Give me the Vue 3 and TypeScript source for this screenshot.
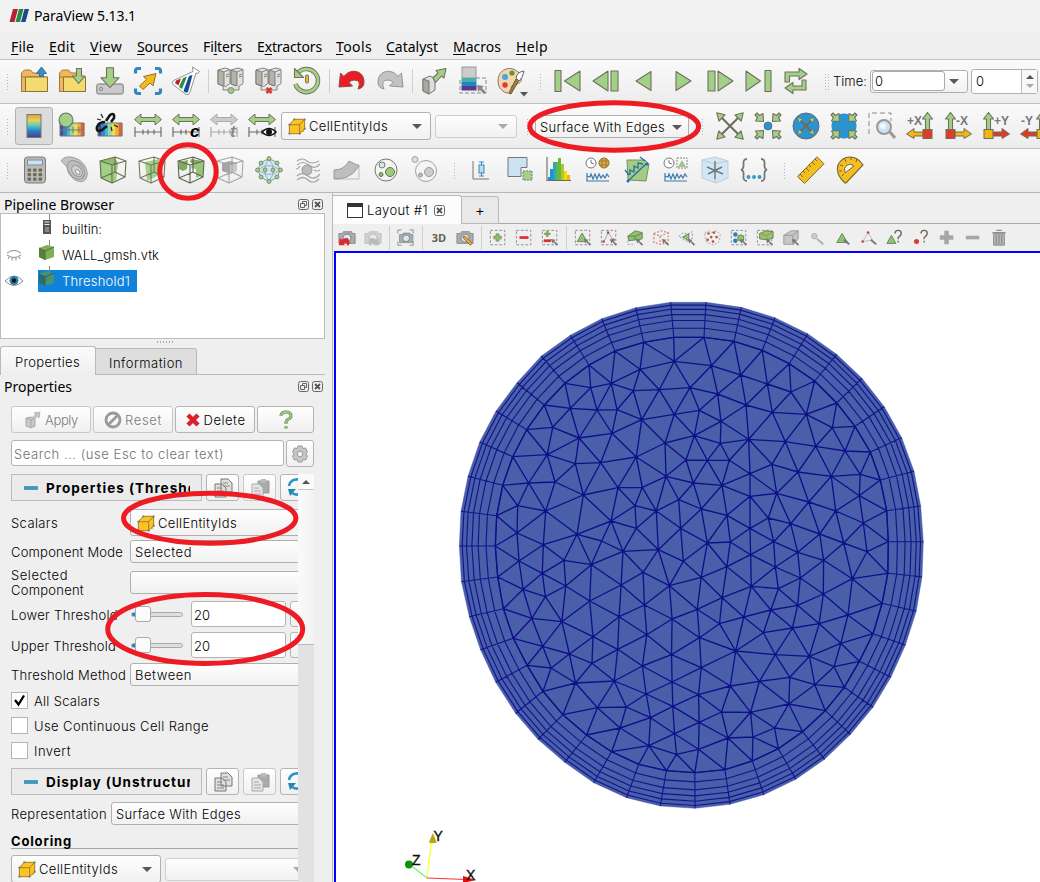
<script setup lang="ts">
type Pt = [number, number]

/* Stretches a label to a given pixel width through letter spacing. */
const vFit = {
  mounted(el: HTMLElement, binding: { value: number }) {
    const n = (el.textContent || '').trim().length
    const w = el.getBoundingClientRect().width
    if (n > 0 && w > 0) el.style.letterSpacing = ((binding.value - w) / n).toFixed(3) + 'px'
  },
}

const G = 'fill="#a3d087" stroke="#6f7060" stroke-width="1.1" stroke-linejoin="round"'
const GY = 'fill="#c2c2c2" stroke="#959595" stroke-width="1" stroke-linejoin="round"'
const DK = 'fill="none" stroke="#6c6c5a" stroke-width="1.1"'
const server = `<g fill="#e3e2e0" stroke="#777" stroke-width=".9" stroke-linejoin="round"><path d="M1 3l7-2 5 1.500v14L8 20l-7-3z"/><path d="M1 3l6 2v14l-6-2z" fill="#b4b3a7"/><path d="M7 5l6-2.500M9 8l3-1M9 10l3-1M14 3l7-2 5 1.500v14L21 20l-7-3z"/><path d="M14 3l6 2v14l-6-2z" fill="#b4b3a7"/><path d="M20 5l6-2.500M22 8l3-1M22 10l3-1M6 20v3h16v-4" /></g>`
const rainbow = (x: number, y: number, w: number, h: number) =>
  ['#394a9b', '#2f85c7', '#41bcd6', '#9fd49b', '#e6df5d', '#f3b03c', '#d56a35'].map((c, i) => `<rect x="${x + (i * w) / 7}" y="${y}" width="${w / 7 + 0.3}" height="${h}" fill="${c}"/>`).join('')
const span = (c: string, s: string) => `<path d="M.5 7.500L7 2v3.500h14V2l6.500 5.500L21 13V9.500H7V13z" fill="${c}" stroke="${s}"/><path d="M1 15v10M27 15v10M1 20h26M9 17.500v5M14 17.500v5M20 17.500v5" fill="none" stroke="${s}" stroke-width="1.200"/>`
const cubeWire = (c: string) => `<path d="M1 5l15-4 11 4-1 16-13 6L2 22zM1 5l12 4 14-4M13 9v18M16 1v15L2 22M16 16l10 5" fill="none" stroke="${c}" stroke-width="1.100" stroke-linejoin="round"/>`
const cam = (o: number) => `<g opacity="${o}"><path d="M1 5h4l1-2h9l1 2h3v11H1z" fill="#ababab" stroke="#888"/><circle cx="10" cy="10" r="4.500" fill="#d8e8f2" stroke="#8795a0" stroke-width="1.500"/></g>`
const marquee = '<rect x="1.500" y="1.500" width="16" height="16" fill="none" stroke="#888" stroke-width="1" stroke-dasharray="3 2"/>'
const cursor = '<path d="M11 11l5 1-1.300 1.300L19 17l-1.500 1.500-3.700-4L12.500 16z" fill="#77776f"/>'
const outward = (w: number) => `<path d="M5 5l18 18M23 5L5 23" stroke="#6c6c5a" stroke-width="${w}"/><path d="M.8.8l8.200 2L3 9zM27.200.8l-2 8.200L19 3zM27.200 27.200l-8.200-2L25 19zM.8 27.200l2-8.200L9 25z" ${G}/>`
const inHeads = (s: number) => {
  const one = '<path d="M1 3l2-2 2.500 2.500L9 1.500 9.500 9.500 1.500 9 3.500 5.500z" />'
  return `<g ${G}>` + [0, 90, 180, 270].map(a => `<g transform="rotate(${a} 14 14) scale(${s})">${one}</g>`).join('') + '</g>'
}
const axis = (label: string, left: boolean, horiz: string, box: string) => {
  const bx = left ? 17 : 2
  const ax = left ? 'M17 20H8v-3.500L.5 22 8 26.500V24h9z' : 'M11 20h9v-3.500L27.500 22 20 26.500V24h-9z'
  return `<path d="M${bx + 2.5} 18V7h-3L${bx + 4.5} .5 ${bx + 9.5} 7h-3v11z" ${G}/><path d="${ax}" fill="${horiz}" stroke="#6f6f55"/><rect x="${bx}" y="17.500" width="9" height="9" fill="${box}" stroke="#6f6f55"/><text x="${left ? 1 : 12}" y="13" font-family="Liberation Sans" font-weight="bold" font-size="12" fill="#777">${label}</text>`
}

const icons: Record<string, string> = {
  open: '<path d="M1.500 25V6l3-3h6l2.500 3h9v12" fill="#f2b75d" stroke="#a57a38"/><path d="M5.500 10H27.500V24.500H1.500V10z" fill="#f2b75d" stroke="#a57a38"/><path d="M5.500 10H27.500V24.500H5.500z" fill="#f5da70" stroke="#857440"/><path d="M19.500 9.500V6.500h-3l5-6.500 5 6.500h-3v3z" fill="#2a92cf" stroke="#456c88"/>',
  load: '<path d="M1.500 25V6l3-3h6l2.500 3h9v12" fill="#f2b75d" stroke="#a57a38"/><path d="M5.500 10H27.500V24.500H1.500V10z" fill="#f2b75d" stroke="#a57a38"/><path d="M5.500 10H27.500V24.500H5.500z" fill="#f5da70" stroke="#857440"/><path d="M18.500 1.500h5V9H27l-6.500 7.500L14.500 9h4z" ' + G + '/>',
  save: '<rect x=".8" y="17" width="26.400" height="10" rx="1.500" fill="#c9c9c9" stroke="#777"/><circle cx="5" cy="22" r="1.500" fill="#eee" stroke="#777"/><path d="M10.500.8h7v10H23L14 20.500 5 10.800h5.500z" ' + G + '/>',
  extract: '<path d="M1.500 6.500V4q0-2.500 2.500-2.500h3M21 1.500h3q2.500 0 2.500 2.500v2.500M26.500 21.500v2.500q0 2.500-2.500 2.500h-3M7 26.500H4q-2.500 0-2.500-2.500v-2.500" fill="none" stroke="#3187bb" stroke-width="3.200"/><path d="M9.500 9.500L22 6.500l-3 12.500-3-3-7 6.500-3.500-3.500 7-6.500z" fill="#f5b916" stroke="#8b7330"/>',
  flask: '<path d="M20.500 0l7 4.500-1.500 2-2-.500L18 25q-1 3.500-4 2.500L1 17.500q-2-1.500.5-4L21 4.500z" fill="#fff" stroke="#888" stroke-width=".9"/><path d="M4 13.500l5-2-2.500 7-3.500-2.500z" fill="#bd2432"/><path d="M11 11l4-1.500-5 12.500-3-2z" fill="#279044"/><path d="M17 9l3.500-1L16 25q-2 1.500-4.500-1z" fill="#174a91"/>',
  connect: server + '<circle cx="14" cy="23.500" r="3" fill="#9ccc80" stroke="#777" stroke-width=".8"/>',
  disconnect: server + '<path d="M11.500 21l5 5M16.500 21l-5 5" stroke="#d93a2e" stroke-width="2.600"/>',
  timer: '<path d="M4 7A11.500 11.500 0 1 1 2.500 17" fill="none" stroke="#70725f" stroke-width="4.600"/><path d="M4 7A11.500 11.500 0 1 1 2.500 17" fill="none" stroke="#a3d087" stroke-width="2.800"/><path d="M1.500 1.500v9h9z" ' + G + '/><rect x="12.500" y="8" width="3" height="8" rx="1" fill="#f5b916" stroke="#777"/>',
  undo: '<path d="M1 20L2.500 6l3.500 3.500C12 1 26 3 26 15q0 6-6 7 4-9-4-9-3 0-5 2.500L14.500 19z" fill="#ee1c24" stroke="#874a3f"/>',
  redo: '<path d="M27 20L25.500 6 22 9.500C16 1 2 3 2 15q0 6 6 7-4-9 4-9 3 0 5 2.500L13.500 19z" ' + GY + '/>',
  serverArrow: '<path d="M2 12l7-3 5 2v12l-6 4-6-3z" fill="#ddd" stroke="#777"/><path d="M2 12l6 2v13l-6-3z" fill="#a8a8a0" stroke="#777"/><path d="M12 11l5-5-2-2.500 10-2-2 9.500-2.500-2-6 6.500z" ' + G + '/>',
  selectMap: '<rect x="3" y="0" width="14" height="11" fill="#ccc" stroke="#999"/><path d="M2.500 11h15v4h-15z" fill="#44b0ae"/><path d="M2.500 15h15v4h-15z" fill="#2284c6"/><path d="M2.500 19h15v4.500h-15z" fill="#533a8b"/><path d="M17 11h10v15H1V11" fill="none" stroke="#888" stroke-dasharray="4 2"/><path d="M18 18l7 1-2 2 4 4-2 2-4-4-2 2z" fill="#888"/>',
  palette: '<path d="M24 9C18-3 1 0 1 14c0 9 8 13 12 12 4-2-1-6 3-8 6-1 10-3 8-9z" fill="#f3d6ad" stroke="#8c7359"/><circle cx="8" cy="10" r="3" fill="#42a7dc"/><circle cx="15" cy="6" r="2.600" fill="#5f9440"/><circle cx="8" cy="18" r="2.700" fill="#df382e"/><path d="M12 26l7-14 3 1-8 14z" fill="#a87d3a" stroke="#675a3b"/><path d="M19 11q1-6 8-7-1 7-5 10z" fill="#fff" stroke="#666"/><path d="M23 25h8l-4 4.500z" fill="#555"/>',
  first: `<path d="M1 3.500h6v21H1zM26 4L10.500 14 26 24z" ${G}/>`,
  back: `<path d="M16 4L1 14l15 10zM19 4h7v20h-7z" ${G}/>`,
  rev: `<path d="M21 4.500L6 14l15 9.500z" ${G}/>`,
  play: `<path d="M8 4.500L23 14 8 23.500z" ${G}/>`,
  fwd: `<path d="M12 4l15 10-15 10zM2 4h7v20H2z" ${G}/>`,
  last: `<path d="M21 3.500h6v21h-6zM2 4l14.500 10L2 24z" ${G}/>`,
  loop: `<path d="M3 15V5h14V1.500L25 7l-8 5.500V9H7.500v6zM24 13v10H11v3.500L3 21l8-5.500V19h9v-6z" ${G}/>`,
  colorbar: '<defs><linearGradient id="cb" x1="0" y1="0" x2="0" y2="1"><stop offset="0" stop-color="#e49a32"/><stop offset=".25" stop-color="#e2d65c"/><stop offset=".48" stop-color="#61c8bd"/><stop offset=".7" stop-color="#2387c9"/><stop offset="1" stop-color="#513a86"/></linearGradient></defs><rect x="7" y="2.500" width="14" height="23" fill="url(#cb)" stroke="#777"/>',
  editMap: rainbow(2, 11, 24, 13) + '<path d="M2 11h24v13H2zM2 18h24M9 15v6M15 15v6M21 15v6" fill="none" stroke="#777"/><circle cx="8" cy="8" r="7" ' + G + '/>',
  linkMap: rainbow(2, 11, 24, 13) + '<path d="M2 11h24v13H2z" fill="none" stroke="#777"/><path d="M10 9l4-6q5-3 4 3l-3 4M9 10q-6 0-8 5-1 6 5 3l5-4" fill="none" stroke="#151515" stroke-width="2.600"/><path d="M5 2l2 4M1 7l4 1M18 13l4 2M15 15l1 4" stroke="#222" stroke-width="1.200"/>',
  range: span('#a3d087', '#6f7060'),
  rangeC: span('#a3d087', '#6f7060') + '<text x="18" y="25" font-size="17" font-style="italic" font-weight="bold" font-family="Liberation Sans">c</text>',
  rangeT: span('#ccc', '#aaa') + '<text x="20" y="25" font-size="17" font-style="italic" font-weight="bold" font-family="Liberation Sans" fill="#888">t</text>',
  rangeEye: span('#a3d087', '#6f7060') + '<path d="M14 20q7-7 14 0-7 7-14 0z" fill="#fff" stroke="#111" stroke-width="1.500"/><circle cx="21" cy="20" r="3" fill="#111"/>',
  resetView: outward(2),
  zoomData: inHeads(1) + '<circle cx="14" cy="14" r="4" fill="#2994d0" stroke="#5d7a80"/>',
  resetClosest: '<circle cx="14" cy="14" r="13" fill="#2994d0" stroke="#667"/><g transform="translate(5 5) scale(.64)">' + outward(3) + '</g>',
  zoomClosest: '<circle cx="14" cy="14" r="12.500" fill="#2994d0"/><rect x="3" y="3" width="22" height="22" rx="3" fill="#2994d0"/>' + inHeads(1),
  zoomBox: '<path d="M1 22V1h22v8" fill="none" stroke="#888" stroke-dasharray="5 3"/><path d="M22 20l5 6" stroke="#999" stroke-width="3"/><circle cx="16" cy="15" r="7" fill="#cde3f3" stroke="#999" stroke-width="2"/><circle cx="15" cy="14" r="3" fill="#eef8ff"/>',
  xp: axis('+X', true, '#f2b613', '#e03a2b'),
  xm: axis('-X', false, '#f2b613', '#e03a2b'),
  yp: axis('+Y', false, '#e03a2b', '#f2b613'),
  ym: axis('-Y', true, '#e03a2b', '#f2b613'),
  calc: '<rect x="3.500" y="1" width="21" height="26" rx="3" fill="#bbb" stroke="#7b7b7b"/><rect x="6.500" y="4" width="15" height="5" fill="#c7e3f5" stroke="#889"/>' + [12.5, 17, 21.5].map(y => [6.5, 12, 17.5].map(x => `<rect x="${x}" y="${y}" width="3.600" height="3.200" rx="1" fill="#6e6e50"/>`).join('')).join(''),
  contour: '<path d="M1 5Q4 0 11 1 20 2 25 10 29 17 26 23 22 28 15 24 8 19 7 11z" fill="#c2c2c2" stroke="#a3a3a3"/><ellipse cx="16" cy="14" rx="10.500" ry="7.500" transform="rotate(50 16 14)" fill="#bdbdbd" stroke="#999"/><ellipse cx="17" cy="15" rx="6.500" ry="4.500" transform="rotate(50 17 15)" fill="#d0d0d0" stroke="#999"/><ellipse cx="17.500" cy="15.500" rx="2.800" ry="1.900" transform="rotate(50 17 16)" fill="#eee" stroke="#999"/>',
  clip: '<path d="M1 5l15-4v1L19 7l-2 17-4 3L2 22z" fill="#8fbd70"/><path d="M2 5l11 4h6l-3 15-3 3L3 23z" fill="#a3d087"/>' + cubeWire('#6b7052'),
  slice: '<path d="M7 6l14-3v16L9 25z" fill="#a3d087"/>' + cubeWire('#75795f'),
  threshold: '<path d="M2 6l9-2-1 9-4 2-4-2zM14 3l12 2-10 3-3-2z" fill="#7faa60"/><path d="M15 8l11-3v14l-7 3v-9l-5-1z" fill="#97c67b"/>' + cubeWire('#60634e'),
  subset: '<path d="M6 7l8-2 7 2v8l-6 3-9-3z" fill="#a5a5a5"/><path d="M14 9l7-2v8l-7 3z" fill="#c9c9c9"/>' + cubeWire('#a5a5a5'),
  glyph: '<circle cx="14" cy="14" r="10.500" fill="#d3e8f7" stroke="#8b9a98"/><path d="M14 3q-9 11 0 22 9-11 0-22M3 14q11-9 22 0-11 9-22 0" fill="none" stroke="#8ba5b2" stroke-width=".8"/>' + [[14, 2.5], [6, 7], [22, 7], [2.5, 14], [10, 14], [18, 14], [25.5, 14], [6, 21], [22, 21], [14, 25.5]].map(p => `<circle cx="${p[0]}" cy="${p[1]}" r="2" fill="#a3d087" stroke="#66734f" stroke-width=".7"/>`).join(''),
  stream: '<circle cx="13" cy="14" r="5" fill="#bbb" stroke="#999"/><path d="M3 5q5-4 10 0t12 0M3 9q6-5 12 0t11-1M3 20q5-5 11 0t12-2M3 24q6-5 11 0t11-1M2 13q2 0 4-3M20 14q3 2 6 0" fill="none" stroke="#a5a5a5" stroke-width="1.200"/>',
  warp: '<path d="M20 9h6v14H1" fill="none" stroke="#bbb"/><path d="M1 14q10 0 15-9l10 5q-5 8-12 11-6 2-13 2z" fill="#bebebe" stroke="#999"/>',
  group: '<circle cx="14" cy="14" r="11" fill="#f4f4f2" stroke="#77776b"/><circle cx="10" cy="9" r="3" fill="#cfe8e2" stroke="#777"/><circle cx="18" cy="16" r="4.500" fill="#9fcb7e" stroke="#66734f"/><circle cx="9" cy="18.500" r="2" fill="#95b982" stroke="#66734f"/>',
  ungroup: '<circle cx="15" cy="15" r="10.500" fill="#f5f5f5" stroke="#a2a2a2"/><circle cx="4" cy="3.500" r="3" fill="#ddd" stroke="#a2a2a2"/><circle cx="18" cy="16" r="4.500" fill="#ccc" stroke="#999"/><circle cx="9.500" cy="19" r="2" fill="#bbb" stroke="#999"/>',
  box: '<path d="M6 5v18h16" fill="none" stroke="#76765f"/><path d="M12 6h5M14.500 6v14M12 20h5" stroke="#3989bd"/><rect x="12" y="9" width="5" height="8" fill="#b9dcf2" stroke="#3989bd"/>',
  corner: '<path d="M2 1.500h19v10h-6v9H2z" fill="#cce3f4" stroke="#777"/><rect x="17" y="15" width="9" height="9" fill="#a5d086" stroke="#777" stroke-dasharray="2 1"/>',
  hist: '<path d="M3 24v-3h2v-8h3v11z" fill="#1993e8"/><path d="M8 24V6h3v18z" fill="#37a7a0"/><path d="M11 24V6h2v18z" fill="#5cb75d"/><path d="M13 24V2h3v22z" fill="#68b83f"/><path d="M16 24V8h3v16z" fill="#acc735"/><path d="M19 24v-9h3v9z" fill="#fcda00"/><path d="M22 24v-5h3v5z" fill="#f2b613"/><path d="M2 1v23.500h24" ' + DK + '/>',
  timeCell: '<circle cx="7" cy="7" r="5" fill="#fff" stroke="#777"/><path d="M7 4v3l3 1" fill="none" stroke="#777"/><circle cx="20" cy="7" r="5" fill="#d8a83f" stroke="#8b7030"/><path d="M16 5h8M16 9h8M18 3v8M22 3v8" stroke="#8b7030" stroke-width=".7"/><path d="M3 17v8h22M3 20l3 1 1-3 2 5 2-5 2 5 2-5 2 4 2-3 2 3 2-4 2 3" fill="none" stroke="#3a7ca9" stroke-width="1.200"/>',
  plotLine: '<path d="M4 4l18 0 4 4-3 17-18-1z" fill="#a2cc83" stroke="#739260"/><path d="M5 25L24 7M2 14l4 5M17 1l5 4M7 19l0-5 4 2 0-6 4 2 0-5 5 1" fill="none" stroke="#276d9c" stroke-width="1.300"/><circle cx="5" cy="25" r="1.500" fill="#1673bc"/><circle cx="24" cy="8" r="1.500" fill="#1673bc"/>',
  timeSel: '<circle cx="7" cy="7" r="5" fill="#fff" stroke="#777"/><path d="M7 4v3l3 1" fill="none" stroke="#777"/><rect x="15" y="2" width="10" height="10" fill="none" stroke="#888" stroke-dasharray="2 1"/><path d="M16 11l4-7 4 7z" fill="#9ec77f"/><path d="M3 17v8h22M3 20l3 1 1-3 2 5 2-5 2 5 2-5 2 4 2-3 2 3 2-4 2 3" fill="none" stroke="#3a7ca9" stroke-width="1.200"/>',
  probe: '<path d="M1 4l13-3 13 4v17l-12 5L1 22z" fill="#d1e7f8" stroke="#c4cbd0"/><path d="M1 4l13 4 13-3M14 8v19" fill="none" stroke="#c0ccd4"/><path d="M14 5v18M6 11l16 7M7 18l14-7" stroke="#6f7779" stroke-width="1.400"/>',
  python: '<path d="M7 3Q3 3 3.500 8T1 14q3 0 2.500 5.500T7 25M21 3q4 0 3.500 5T27 14q-3 0-2.500 5.500T21 25" fill="none" stroke="#777" stroke-width="1.800"/><g fill="#369acb"><circle cx="8.500" cy="21" r="2"/><circle cx="14" cy="21" r="2"/><circle cx="19.500" cy="21" r="2"/></g>',
  ruler: '<path d="M.5 20.500L20 .8l7 7L7.500 27.500z" fill="#f4be20" stroke="#806d2d"/><path d="M3 18l3 3M6 15l2 2M9 12l3 3M12 9l2 2M15 6l3 3M18 3l2 2" stroke="#716634"/>',
  protractor: '<path d="M9 27Q-1 18 2 9 6 1 14 1 22 1 27 9L10 27z" fill="#f4be20" stroke="#76672f" stroke-width="1.200"/><path d="M9 17q-2-5 2-8 4-2 7 1z" fill="#f5f5f5" stroke="#76672f"/><path d="M6 20l2-2M3 15h3M4 9l3 1M9 3l1 3M15 1v3M21 3l-1 3" stroke="#76672f"/>',
  cube: '<path d="M6 1.500L18 5v11H6z" fill="#f5c02b"/><path d="M1.500 8L7 2h11.500v10.500L13 18H1.500zM1.500 8H13v10M13 8l5.500-6" fill="#fcc423" stroke="#98742c"/><g fill="#777"><path d="M.5 7h2v2h-2zM6 1h2v2H6zM17.500 1h2v2h-2zM12 17h2v2h-2zM.5 17h2v2h-2zM17.500 11.500h2v2h-2z"/></g>',
  camUndo: cam(1) + '<path d="M1 18l1-8 2 2q8-5 9 3 0 3-3 4 1-5-4-3l2 2z" fill="#dd2b2b"/>',
  camRedo: cam(0.45) + '<path d="M17 18l-1-8-2 2q-8-5-9 3 0 3 3 4-1-5 4-3l-2 2z" fill="#bbb"/>',
  capture: '<g transform="translate(2 2) scale(.82)">' + cam(1) + '</g><path d="M1 5V1h4M14 1h4v4M18 14v4h-4M5 18H1v-4" fill="none" stroke="#888"/>',
  camEdit: cam(1) + '<path d="M8 8l2 0 8 8-2 2-8-8z" fill="#e8ac30" stroke="#7d672f"/>',
  plus: marquee + '<path d="M9.500 5v9M5 9.500h9" stroke="#6d8e55" stroke-width="4"/><path d="M9.500 6v7M6 9.500h7" stroke="#8bc36b" stroke-width="2.500"/>',
  minus: marquee + '<path d="M5 9.500h10" stroke="#dd2c2d" stroke-width="3"/>',
  pm: marquee + '<path d="M7 2v7M3.500 5.500h7" stroke="#79a85d" stroke-width="2.500"/><path d="M3 13h8" stroke="#dd2c2d" stroke-width="3"/>' + cursor,
  selTri: marquee + '<path d="M3.500 14L9 4.500 14.500 14z" fill="#91c373" stroke="#668054"/>' + cursor,
  selPts: marquee + '<path d="M4 15L9 4l6 9" fill="none" stroke="#999"/><g fill="#ad5940"><circle cx="9" cy="4" r="1.500"/><circle cx="4" cy="14" r="1.500"/><circle cx="15" cy="12" r="1.500"/></g>' + cursor,
  selFr: '<path d="M2 8l8-6 8 2v7l-6 1-9 1z" fill="#8fc06e" stroke="#628152"/><path d="M2 8l8 0 8-3M10 8v4" fill="none" stroke="#628152"/><path d="M2 13v4h7" fill="none" stroke="#999" stroke-dasharray="2 2"/>' + cursor,
  selFrP: '<path d="M2 5l8-3 8 2v11l-8 2-8-2zM2 5l7 3v9M9 8l9-4" fill="none" stroke="#df7d72" stroke-dasharray="2 2" stroke-width="1.400"/>' + cursor,
  lasso: '<path d="M1 8l5-4 5 2 5-3v7l-3 4-5-1-4-3z" fill="none" stroke="#888" stroke-dasharray="2 2"/><path d="M5 9l7-4v8z" fill="#91c373" stroke="#668054"/>' + cursor,
  lassoP: '<path d="M1 4l4-2 4 2 5-2 4 4-1 8-6 4-8-3-2-6z" fill="none" stroke="#999" stroke-dasharray="2 2"/><g fill="#b45942"><circle cx="5" cy="5" r="1.500"/><circle cx="11" cy="4" r="1.500"/><circle cx="8" cy="9" r="1.500"/><circle cx="4" cy="12" r="1.500"/><circle cx="14" cy="9" r="1.500"/><circle cx="10" cy="14" r="1.500"/></g>',
  blocks: marquee + '<circle cx="6" cy="6" r="2.500" fill="#2d83b3"/><circle cx="6" cy="13" r="2.500" fill="#2d83b3"/><circle cx="12" cy="10" r="3.500" fill="#91c373" stroke="#668054"/>' + cursor,
  blockFr: marquee + '<path d="M4 5l7-3 8 1v7l-7 2-8-1z" fill="#91c373" stroke="#668054"/><path d="M4 5l8 2 7-4M12 7v5" fill="none" stroke="#b08e35"/>' + cursor,
  inter: '<path d="M2 7l8-5h8v9l-5 6H2zM2 7h10v10M12 7l6-5" fill="#c6c6c6" stroke="#999"/>' + cursor,
  hover: '<circle cx="7" cy="8" r="3" fill="#ccc" stroke="#aaa"/><path d="M10 11l7 6" stroke="#aaa" stroke-width="2"/>',
  hoverCell: '<path d="M3 15L9 5l6 10z" fill="#91c373" stroke="#668054"/><path d="M11 12l6 5" stroke="#777" stroke-width="2"/>',
  hoverPt: '<path d="M3 14L9 4l5 8z" fill="none" stroke="#bbb"/><g fill="#ad5940"><circle cx="9" cy="4" r="1.500"/><circle cx="3" cy="14" r="1.500"/></g><path d="M12 12l6 5" stroke="#777" stroke-width="2"/>',
  askCell: '<path d="M1 16l5-9 5 9z" fill="#91c373" stroke="#668054"/><path d="M10 5q0-3.500 3.500-3.500t3.500 3.500q0 2-3.500 4.500v2M13.500 13v2" fill="none" stroke="#66665a" stroke-width="1.500"/>',
  askPt: '<circle cx="5" cy="14" r="2.800" fill="#d63e2d"/><path d="M10 5q0-3.500 3.500-3.500t3.500 3.500q0 2-3.500 4.500v2M13.500 13v2" fill="none" stroke="#66665a" stroke-width="1.500"/>',
  grow: '<path d="M9.500 2v15M2 9.500h15" stroke="#a6a6a6" stroke-width="5"/>',
  shrink: '<path d="M2 9.500h15" stroke="#a6a6a6" stroke-width="4"/>',
  trash: '<path d="M4 5h12v13H4z" fill="#b8b8b8" stroke="#888"/><path d="M2.500 4h15M7 1.500h6M7 6v11M10 6v11M13 6v11" stroke="#919191" stroke-width="1.500"/>',
}

const bar1a = ['open', 'load', 'save', 'extract', 'flask', '|', 'connect', 'disconnect', 'timer', '|', 'undo', 'redo', '|', 'serverArrow', 'selectMap', 'palette']
const bar1b = ['first', 'back', 'rev', 'play', 'fwd', 'last', 'loop']
const bar2a = ['colorbar', 'editMap', 'linkMap', 'range', 'rangeC', 'rangeT', 'rangeEye']
const bar2b = ['resetView', 'zoomData', 'resetClosest', 'zoomClosest', 'zoomBox', 'xp', 'xm', 'yp', 'ym']
const bar3a = ['calc', 'contour', 'clip', 'slice', 'threshold', 'subset', 'glyph', 'stream', 'warp', 'group', 'ungroup']
const bar3b = ['box', 'corner', 'hist', 'timeCell', 'plotLine', 'timeSel', 'probe', 'python']
const bar3c = ['ruler', 'protractor']
const viewBar = ['camUndo', 'camRedo', '|', 'capture', '|', '3D', 'camEdit', '|', 'plus', 'minus', 'pm', '|', 'selTri', 'selPts', 'selFr', 'selFrP', 'lasso', 'lassoP', 'blocks', 'blockFr', 'inter', 'hover', 'hoverCell', 'hoverPt', 'askCell', 'askPt', 'grow', 'shrink', 'trash']

const menus = [
  { pre: '', key: 'F', post: 'ile', w: 23, gap: 15 },
  { pre: '', key: 'E', post: 'dit', w: 26, gap: 15 },
  { pre: '', key: 'V', post: 'iew', w: 32, gap: 15 },
  { pre: '', key: 'S', post: 'ources', w: 51, gap: 15 },
  { pre: 'Fi', key: 'l', post: 'ters', w: 39, gap: 15 },
  { pre: 'E', key: 'x', post: 'tractors', w: 65, gap: 14 },
  { pre: '', key: 'T', post: 'ools', w: 36, gap: 14 },
  { pre: '', key: 'C', post: 'atalyst', w: 52, gap: 15 },
  { pre: '', key: 'M', post: 'acros', w: 48, gap: 15 },
  { pre: '', key: 'H', post: 'elp', w: 32, gap: 0 },
]
const groups = [
  { t: 'Properties (Threshold1)', w: 178 },
  { t: 'Display (UnstructuredGrid)', w: 203 },
]
const checks = [
  { label: 'All Scalars', on: true, w: 66 },
  { label: 'Use Continuous Cell Range', on: false, w: 175 },
  { label: 'Invert', on: false, w: 37 },
]

/* Mesh nodes, stored per patch as flat x,y lists with the patch origin and scale. */
interface Patch { o: Pt; s: Pt; d: number[] }
const nodes = (p: Patch): Pt[] => {
  const r: Pt[] = []
  for (let i = 0; i < p.d.length; i += 2) r.push([p.o[0] + p.d[i] / p.s[0], p.o[1] + p.d[i + 1] / p.s[1]])
  return r
}
const NW: [Pt, Pt] = [[450, 295], [3, 3]]
const NE: [Pt, Pt] = [[690, 295], [3, 3]]
const S: [Pt, Pt] = [[400, 550], [2.958, 3]]
const patch = (b: [Pt, Pt], d: number[]) => nodes({ o: b[0], s: b[1], d })

/* Alternating outer / inner wall nodes around the rim. */
const rim = [
  ...patch(NW, [662,22,671,127, 557,38,581,142, 455,71,495,168, 361,121,417,210, 274,183,345,265, 201,263,283,330, 138,348,230,404, 89,441,188,485, 54,544,158,571, 33,649,140,662, 28,753,136,753]),
  ...patch(S, [182,95,289,81, 205,200,306,176, 238,299,335,265, 283,397,376,346, 342,490,423,424, 408,568,482,494, 487,637,552,555, 573,698,626,605, 670,743,706,643, 770,768,788,662, 873,775,872,668, 976,763,961,659, 1076,734,1042,633, 1171,688,1119,596, 1256,628,1191,545, 1333,553,1258,482, 1399,472,1314,412, 1452,382,1359,334, 1495,285,1399,251, 1527,184,1426,160, 1544,80,1443,70]),
  ...patch(NE, [700,740,595,740, 692,633,590,647, 672,529,571,555, 635,428,541,471, 583,335,495,394, 516,250,440,324, 440,178,374,258, 353,116,298,206, 255,68,217,166, 154,37,132,139, 48,22,42,127]),
]
const outer = rim.filter((_, i) => i % 2 === 0)
const inner = rim.filter((_, i) => i % 2 === 1)
const core = [
  ...patch(NW, [673,199,570,223,422,278,484,265,550,287,628,284,361,340,441,345,501,344,575,374,673,358,308,397,387,429,486,415,292,479,376,506,452,503,559,486,645,444,708,495,236,564,315,561,400,600,504,578,577,577,648,544,203,632,287,648,555,632,619,648,686,614,483,678,201,714,280,749,381,718,455,738,559,700,692,700,519,769,625,764]),
  ...patch(NE, [64,212,152,240,232,267,303,291,0,278,83,297,168,330,28,346,247,352,349,358,93,379,13,422,91,445,176,433,286,440,377,454,427,398,465,468,52,496,118,496,246,508,324,531,424,544,511,538,10,564,96,571,180,536,180,604,260,595,356,621,508,602,437,648,34,642,111,661,235,669,302,686,520,684,389,717,461,744,180,700,52,744,121,741,251,740,323,772,531,770]),
  ...patch(S, [352,33,421,70,485,31,566,44,719,67,838,34,967,50,1037,14,1110,51,1253,31,364,118,430,140,490,108,654,105,797,107,891,82,1039,109,1119,116,1184,84,1338,86,1252,132,561,153,723,165,879,178,953,143,390,205,479,215,648,200,805,207,945,221,1017,201,1097,180,1176,166,1325,195,1240,221,1161,234,1075,248,886,263,730,254,571,260,422,289,501,312,644,298,803,314,993,303,1110,314,1211,319,1304,280,1284,350,447,354,568,340,717,348,891,353,519,399,634,393,805,396,977,408,1063,394,1153,382,1227,404,728,432,883,434,584,473,669,471,807,469,951,486,1037,487,1150,462,741,503,651,534,885,517,812,551,970,564,1044,561,1108,534,736,587,883,598,818,613]),
]

/* Bowyer–Watson triangulation of the core nodes. */
function edges(pts: Pt[]): [number, number][] {
  const n = pts.length
  const all: Pt[] = [...pts, [-9000, -9000], [11000, -9000], [700, 14000]]
  const make = (a: number, b: number, c: number) => {
    const [ax, ay] = all[a], [bx, by] = all[b], [cx, cy] = all[c]
    const d = 2 * (ax * (by - cy) + bx * (cy - ay) + cx * (ay - by))
    const a2 = ax * ax + ay * ay, b2 = bx * bx + by * by, c2 = cx * cx + cy * cy
    const x = (a2 * (by - cy) + b2 * (cy - ay) + c2 * (ay - by)) / d
    const y = (a2 * (cx - bx) + b2 * (ax - cx) + c2 * (bx - ax)) / d
    return { v: [a, b, c], x, y, r: (ax - x) ** 2 + (ay - y) ** 2 }
  }
  let tris = [make(n, n + 1, n + 2)]
  for (let i = 0; i < n; i++) {
    const [px, py] = all[i]
    const bad = tris.filter(t => (px - t.x) ** 2 + (py - t.y) ** 2 < t.r)
    tris = tris.filter(t => !bad.includes(t))
    const seen = new Map<string, [number, number, number]>()
    for (const t of bad) for (let k = 0; k < 3; k++) {
      const a = t.v[k], b = t.v[(k + 1) % 3]
      const key = Math.min(a, b) + '-' + Math.max(a, b)
      const e = seen.get(key)
      seen.set(key, [a, b, e ? e[2] + 1 : 1])
    }
    for (const [a, b, c] of seen.values()) if (c === 1) tris.push(make(a, b, i))
  }
  const out = new Map<string, [number, number]>()
  for (const t of tris) {
    if (t.v.some(v => v >= n)) continue
    for (let k = 0; k < 3; k++) {
      const a = Math.min(t.v[k], t.v[(k + 1) % 3]), b = Math.max(t.v[k], t.v[(k + 1) % 3])
      out.set(a + '-' + b, [a, b])
    }
  }
  return [...out.values()]
}
const f = (p: Pt) => p[0].toFixed(1) + ' ' + p[1].toFixed(1)
const ring = (t: number) => 'M' + outer.map((p, i) => f([p[0] + (inner[i][0] - p[0]) * t, p[1] + (inner[i][1] - p[1]) * t])).join('L') + 'Z'
const hull = ring(0)
const layers = [0.08, 0.2, 0.35, 0.52, 0.74, 1].map(ring).join('')
const spokes = outer.map((p, i) => `M${f(p)}L${f(inner[i])}`).join('')
const meshPts = [...inner, ...core]
const web = edges(meshPts).map(([a, b]) => `M${f(meshPts[a])}L${f(meshPts[b])}`).join('')
</script>

<template>
  <div class="app">
    <header class="title">
      <svg class="logo" width="20" height="16" viewBox="0 0 20 16"><path d="M4 1h5L5.500 14h-5z" fill="#b52330"/><path d="M10 1h4.500L11 14H6.500z" fill="#258b43"/><path d="M15.500 1H20l-3.500 13H12z" fill="#174a8f"/></svg>
      <span v-fit="102">ParaView 5.13.1</span>
    </header>
    <nav class="menu">
      <span v-for="m in menus" :key="m.key + m.post" v-fit="m.w" :style="{ marginRight: m.gap + 'px' }">{{ m.pre }}<u>{{ m.key }}</u>{{ m.post }}</span>
    </nav>

    <div class="bar one">
      <i class="grip"></i>
      <template v-for="(n, i) in bar1a" :key="i">
        <i v-if="n === '|'" class="sep"></i>
        <span v-else class="cell"><svg width="28" height="28" viewBox="0 0 28 28" v-html="icons[n]"></svg></span>
      </template>
      <i class="grip mid play-grip"></i>
      <span v-for="n in bar1b" :key="n" class="cell"><svg width="28" height="28" viewBox="0 0 28 28" v-html="icons[n]"></svg></span>
      <i class="grip time-grip"></i>
      <span class="time-label"><span v-fit="34">Time:</span></span>
      <div class="combo time"><div class="inset">0</div><b class="arrow"></b></div>
      <div class="spin"><span>0</span><div class="steps"><b class="up"></b><b class="down"></b></div></div>
    </div>

    <div class="bar">
      <i class="grip"></i>
      <span v-for="n in bar2a" :key="n" class="cell" :class="{ pressed: n === 'colorbar' }"><svg width="28" height="28" viewBox="0 0 28 28" v-html="icons[n]"></svg></span>
      <div class="combo array"><svg width="18" height="19" viewBox="0 0 20 20" v-html="icons.cube"></svg><span v-fit="79">CellEntityIds</span><b class="arrow"></b></div>
      <div class="combo comp off"><b class="arrow"></b></div>
      <i class="grip surf-grip"></i>
      <div class="combo surf"><span v-fit="125">Surface With Edges</span><b class="arrow"></b></div>
      <i class="grip cam-grip"></i>
      <span v-for="n in bar2b" :key="n" class="cell"><svg width="28" height="28" viewBox="0 0 28 28" v-html="icons[n]"></svg></span>
    </div>

    <div class="bar third">
      <i class="grip"></i>
      <span v-for="n in bar3a" :key="n" class="cell"><svg width="28" height="28" viewBox="0 0 28 28" v-html="icons[n]"></svg></span>
      <i class="grip mid"></i>
      <span v-for="n in bar3b" :key="n" class="cell"><svg width="28" height="28" viewBox="0 0 28 28" v-html="icons[n]"></svg></span>
      <i class="grip mid"></i>
      <span v-for="n in bar3c" :key="n" class="cell"><svg width="28" height="28" viewBox="0 0 28 28" v-html="icons[n]"></svg></span>
    </div>

    <main class="body">
      <aside class="dock">
        <div class="dock-title first">
          <span v-fit="110">Pipeline Browser</span>
          <svg class="wbtns" width="26" height="12" viewBox="0 0 26 12"><g fill="none" stroke="#666"><rect x=".5" y=".5" width="10" height="10" rx="2"/><path d="M4.500 4V2.500h4v4H7M2.500 4.500h4v4h-4z"/><rect x="14.500" y=".5" width="10" height="10" rx="2"/></g><path d="M17 3l5 5M22 3l-5 5" stroke="#555" stroke-width="1.800"/></svg>
        </div>
        <div class="tree">
          <div class="node"><i class="eye"></i><i class="stem"></i>
            <svg class="ti" width="18" height="18" viewBox="0 0 18 18"><path d="M5 2h8v14H5z" fill="#555"/><path d="M6.500 4h5M6.500 6.500h5" stroke="#eee"/><path d="M7 9h4v5H7z" fill="#888"/></svg>
            <span class="tag"><span v-fit="40">builtin:</span></span></div>
          <div class="node"><i class="eye"><svg width="18" height="14" viewBox="0 0 18 14"><path d="M2 5q7-5 14 0M2 7q7 5 14 0M4 9l-1 2M7 10v2.500M11 10v2.500M14 9l1 2" fill="none" stroke="#888"/></svg></i><i class="stem"></i>
            <svg class="ti" width="18" height="18" viewBox="0 0 18 18"><path d="M1 4l8-3 7 2v10l-9 3-6-3z" fill="#7fae57"/><path d="M1 4l6 3v9l-6-3z" fill="#56813e"/><path d="M1 4l6 3 9-4M7 7v9" fill="none" stroke="#4f6e3f"/></svg>
            <span class="tag"><span v-fit="97">WALL_gmsh.vtk</span></span></div>
          <div class="node sel"><i class="eye"><svg width="18" height="14" viewBox="0 0 18 14"><path d="M0 7q9-10 18 0-9 9-18 0z" fill="#fff" stroke="#888"/><circle cx="9" cy="6.500" r="4.500" fill="#2583b4"/><circle cx="9" cy="6.500" r="2.200" fill="#111"/></svg></i><i class="stem"></i>
            <div class="pick"><svg class="ti" width="18" height="18" viewBox="0 0 18 18"><path d="M1 4l8-3 7 2v10l-9 3-6-3z" fill="#489174"/><path d="M1 4l6 3v9l-6-3z" fill="#2b6e69"/><path d="M1 4l6 3 9-4M7 7v9" fill="none" stroke="#2d6070"/></svg>
            <span class="tag"><span v-fit="68">Threshold1</span></span></div></div>
        </div>
        <div class="split"></div>
        <div class="tabs"><div class="tab on"><span v-fit="65">Properties</span></div><div class="tab"><span v-fit="74">Information</span></div></div>
        <div class="dock-title second">
          <span v-fit="68">Properties</span>
          <svg class="wbtns" width="26" height="12" viewBox="0 0 26 12"><g fill="none" stroke="#666"><rect x=".5" y=".5" width="10" height="10" rx="2"/><path d="M4.500 4V2.500h4v4H7M2.500 4.500h4v4h-4z"/><rect x="14.500" y=".5" width="10" height="10" rx="2"/></g><path d="M17 3l5 5M22 3l-5 5" stroke="#555" stroke-width="1.800"/></svg>
        </div>
        <div class="actions">
          <div class="btn off"><svg width="18" height="18" viewBox="0 0 18 18"><path d="M2 7l5-1 4 2v7l-4 2-5-2zM2 7l5 2v8M7 9l4-1" fill="#c9c9c9" stroke="#aaa"/><path d="M8 7l4-4-2-1 6-1-1 6-1.500-2L10 9z" fill="#c5c5c5" stroke="#aaa" stroke-width=".7"/></svg><span v-fit="33">Apply</span></div>
          <div class="btn off"><svg width="18" height="18" viewBox="0 0 18 18"><circle cx="9" cy="9" r="7" fill="none" stroke="#999" stroke-width="2.800"/><path d="M4.500 13.500l9-9" stroke="#999" stroke-width="2.800"/></svg><span v-fit="37">Reset</span></div>
          <div class="btn"><svg width="16" height="16" viewBox="0 0 16 16"><path d="M3 3l10 10M13 3L3 13" stroke="#dc2027" stroke-width="4.500"/></svg><span v-fit="42">Delete</span></div>
          <div class="btn help"><svg width="16" height="20" viewBox="0 0 16 20"><path d="M3 6q0-4 5-4t5 4q0 2-3 3.500-2 1-2 3.500v1M8 16v2.500" fill="none" stroke="#667c55" stroke-width="3"/><path d="M3 6q0-4 5-4t5 4q0 2-3 3.500-2 1-2 3.500v1M8 16v2.500" fill="none" stroke="#9cca7e" stroke-width="1.800"/></svg></div>
        </div>
        <div class="search">
          <div class="field"><span v-fit="210">Search ... (use Esc to clear text)</span></div>
          <div class="btn gear"><svg width="18" height="18" viewBox="0 0 18 18"><path d="M7 1h4l1 2.500 2.500-.5 2 3.500L15 9l1.500 2.500-2 3.500-2.500-.500L11 17H7l-1-2.500-2.500.500-2-3.500L3 9 1.500 6.500l2-3.500 2.500.500z" fill="#c6c6c6" stroke="#999"/><circle cx="9" cy="9" r="2.800" fill="#f4f4f4" stroke="#999"/></svg></div>
        </div>
        <div class="scroll">
          <div class="form">
            <div v-for="(h, k) in groups" :key="k" class="group" :class="'o' + k">
              <div class="gh"><i class="dash"></i><b><span v-fit="h.w">{{ h.t }}</span></b></div>
              <div class="btn sq"><svg width="20" height="20" viewBox="0 0 20 20"><path d="M8 1h7l4 4v9H8zM2 6h7l4 4v9H2z" fill="#e0e0da" stroke="#777"/><path d="M10 5h5M10 8h7M4 10h5M4 13h7M4 16h7" stroke="#888"/></svg></div>
              <div class="btn sq off"><svg width="20" height="20" viewBox="0 0 20 20"><path d="M8 3h11v12H8z" fill="#aaa" stroke="#999"/><path d="M11 1h5v4h-5z" fill="#bbb"/><path d="M2 6h7l4 4v9H2z" fill="#e5e5e5" stroke="#aaa"/><path d="M4 10h5M4 13h7M4 16h7" stroke="#aaa"/></svg></div>
              <div class="btn sq"><svg width="22" height="22" viewBox="0 0 22 22"><path d="M3 9a8 7.500 0 0 1 14-4" fill="none" stroke="#2e93c7" stroke-width="2.600"/><path d="M20 12a9 8 0 0 1-14 4" fill="none" stroke="#2e93c7" stroke-width="2.600"/><path d="M2 12h8l-6 7z" fill="#2586b8"/></svg></div>
            </div>
            <div class="row r-scalars"><label><span v-fit="47">Scalars</span></label><div class="combo"><svg width="18" height="19" viewBox="0 0 20 20" v-html="icons.cube"></svg><span v-fit="79">CellEntityIds</span></div></div>
            <div class="row r-mode"><label><span v-fit="112">Component Mode</span></label><div class="combo"><span v-fit="57">Selected</span></div></div>
            <div class="row r-comp"><label><span v-fit="57">Selected</span><br><span v-fit="73">Component</span></label><div class="combo"></div></div>
            <div class="row r-low"><label><span v-fit="107">Lower Threshold</span></label><div class="slider"><i></i></div><div class="field val">20</div><div class="btn tail"></div></div>
            <div class="row r-up"><label><span v-fit="105">Upper Threshold</span></label><div class="slider"><i></i></div><div class="field val">20</div><div class="btn tail"></div></div>
            <div class="row r-method"><label><span v-fit="115">Threshold Method</span></label><div class="combo"><span v-fit="57">Between</span></div></div>
            <div class="checks">
              <div v-for="c in checks" :key="c.label" class="check"><i class="cb"><svg v-if="c.on" width="15" height="15" viewBox="0 0 15 15"><path d="M3 7l3.500 4.500L12 2.500" fill="none" stroke="#000" stroke-width="2.300"/></svg></i><span class="ct"><span v-fit="c.w">{{ c.label }}</span></span></div>
            </div>
            <div class="row r-rep"><label><span v-fit="96">Representation</span></label><div class="combo"><span v-fit="125">Surface With Edges</span></div></div>
            <div class="coloring"><span v-fit="61">Coloring</span></div>
            <div class="row r-color"><div class="combo array"><svg width="18" height="19" viewBox="0 0 20 20" v-html="icons.cube"></svg><span v-fit="79">CellEntityIds</span><b class="arrow"></b></div><div class="combo off last"><b class="arrow"></b></div></div>
          </div>
          <div class="sbar"><div class="sup"><b class="up"></b></div><div class="thumb"></div></div>
        </div>
      </aside>

      <section class="view">
        <div class="vtabs">
          <div class="vtab on"><i class="win"></i><span v-fit="61">Layout #1</span><svg width="12" height="12" viewBox="0 0 12 12"><rect x=".5" y=".5" width="10" height="10" rx="2" fill="none" stroke="#666"/><path d="M3 3l5 5M8 3L3 8" stroke="#555" stroke-width="1.800"/></svg></div>
          <div class="vtab add">+</div>
          <div class="fill"></div>
        </div>
        <div class="vbar">
          <template v-for="(n, i) in viewBar" :key="i">
            <i v-if="n === '|'" class="sep"></i>
            <span v-else-if="n === '3D'" class="cell three">3D</span>
            <span v-else class="cell"><svg width="18" height="18" viewBox="0 0 20 20" v-html="icons[n]"></svg></span>
          </template>
        </div>
        <div class="canvas">
          <svg width="704" height="629" viewBox="336 253 704 629">
            <path :d="hull" fill="#495faa" stroke="#3b4da0" stroke-width=".4" />
            <path :d="layers + spokes" fill="none" stroke="#12158a" stroke-width="1.15" />
            <path :d="web" fill="none" stroke="#0f1088" stroke-width="1.35" />
            <path d="M427 878l4.500-37" stroke="#ffff20" stroke-width="1.200" />
            <path d="M427 878l-14-11" stroke="#6cf36c" stroke-width="1.200" />
            <path d="M427 878l38 1.500" stroke="#f33" stroke-width="1.200" />
            <path d="M432.800 833l4 9.500q-4 1.500-8 0z" fill="#b4aa13" />
            <circle cx="409" cy="864.500" r="4" fill="#089508" />
            <path d="M463 876l13 4-13 3z" fill="#e60d0d" />
            <g font-family="Liberation Sans, Arial, sans-serif" font-size="14" fill="#111" stroke="#111" stroke-width=".4"><text x="433.500" y="841">Y</text><text x="412" y="864.500">Z</text><text x="466" y="879.500">X</text></g>
          </svg>
        </div>
      </section>
    </main>

    <svg class="marks" width="1040" height="882" viewBox="0 0 1040 882" fill="none" stroke="#ed1c24" stroke-width="5">
      <ellipse cx="614.200" cy="126.500" rx="84.400" ry="23.700" />
      <ellipse cx="188" cy="171.500" rx="28.200" ry="26.700" />
      <ellipse cx="209.700" cy="518.200" rx="86.200" ry="25" />
      <ellipse cx="205.200" cy="629" rx="97.500" ry="34.400" />
    </svg>
  </div>
</template>

<style>
html, body { margin: 0; overflow: hidden; }
</style>
<style scoped>
.app { position: relative; width: 1040px; height: 882px; overflow: hidden; background: #efefef; color: #000; font: 300 13px/15px Inter, "Noto Sans", sans-serif; white-space: nowrap; display: flex; flex-direction: column; }
.app *, .app *::before { box-sizing: border-box; flex-shrink: 0; }
i { font-style: normal; display: block; }
svg { display: block; }
.title { height: 32px; display: flex; align-items: center; padding-left: 9px; background: #f2f2f2; font: 14px/20px "Noto Sans", sans-serif; }
.title .logo { margin-right: 5px; }
.menu { height: 27px; display: flex; align-items: center; padding: 2px 0 0 11px; font: 14px/20px "Noto Sans", sans-serif; }
.menu u { text-underline-offset: 2px; text-decoration-thickness: 1px; }
.bar { height: 45px; border-top: 1px solid #c0c0c0; display: flex; align-items: center; background: linear-gradient(#fafafa, #ececec); overflow: hidden; }
.bar.one { height: 44px; padding-bottom: 1px; }
.bar.third { border-bottom: 1px solid #b7b7b7; padding-bottom: 1px; }
.cell { width: 38px; height: 38px; display: flex; align-items: center; justify-content: center; }
.cell svg { overflow: visible; }
.third .cell { width: 39px; }
.pressed { background: #dcdcdc; border: 1px solid #b2b2b2; border-radius: 3px; }
.grip { width: 15px; height: 17px; background: radial-gradient(circle, #b5b5b5 .7px, transparent .9px) 0 0 / 3px 3px; background-clip: content-box; padding: 0 5px; }
.grip.mid { width: 18px; padding: 0 5px 0 8px; }
.third .grip.mid { width: 17.5px; }
.grip.play-grip { width: 19px; padding: 0 6px 0 8px; }
.grip.time-grip { width: 18px; padding: 0 4px 0 9px; }
.grip.surf-grip { width: 18px; padding: 0 4px 0 9px; }
.grip.cam-grip { width: 22px; padding: 0 6px 0 11px; }
.sep { width: 7px; height: 24px; background: linear-gradient(#cfcfcf, #cfcfcf) 3px 0 / 1px 100% no-repeat; }
.combo { height: 23px; border: 1px solid #b0b0b0; border-radius: 3px; background: linear-gradient(#fefefe, #f1f1f1); display: flex; align-items: center; padding: 1px 7px 0 4px; }
.combo.off { border-color: #cdcdcd; }
.arrow { margin-left: auto; border: 5px solid transparent; border-top-color: #585858; border-bottom: 0; }
.off .arrow { border-top-color: #aaa; }
.combo.array { width: 150px; height: 28px; padding: 1px 8px 0 6px; }
.combo.array svg { margin-right: 3px; }
.combo.comp { width: 82px; margin-left: 4px; padding-right: 8px; }
.combo.surf { width: 154px; padding: 2px 6px 0 4px; }
.time-label { width: 37px; padding-top: 1px; }
.combo.time { width: 98px; padding: 0 8px 0 1px; }
.inset { width: 73px; height: 20px; border: 1px solid #aaa; border-radius: 3px; background: #fff; padding-left: 2px; line-height: 18px; }
.spin { width: 67px; height: 25px; margin-left: 3px; border: 1px solid #b0b0b0; border-radius: 3px; background: #fff; display: flex; justify-content: space-between; align-items: center; padding-left: 4px; }
.steps { width: 16px; height: 23px; border-left: 1px solid #bbb; display: flex; flex-direction: column; align-items: center; gap: 5px; justify-content: center; background: #f8f8f8; }
.up { border: 4.500px solid transparent; border-bottom-color: #555; border-top: 0; }
.down { border: 4.500px solid transparent; border-top-color: #aaa; border-bottom: 0; }
.body { flex: 1 1 0; min-height: 0; display: flex; align-items: stretch; }
.dock { width: 333px; border-right: 1px solid #bbb; display: flex; flex-direction: column; }
.dock-title { display: flex; justify-content: space-between; align-items: center; padding: 0 9px 0 4px; width: 333px; font: 14px/18px "Noto Sans", sans-serif; }
.dock-title.first { height: 20px; padding-top: 3px; }
.dock-title.second { height: 24px; }
.tree { width: 325px; height: 126px; border: 1px solid #bcbcbc; background: #fff; }
.node { height: 26px; display: flex; align-items: center; position: relative; padding-top: 4px; }
.eye { width: 33px; padding-left: 4px; }
.stem { position: absolute; left: 48px; top: 0; height: 7px; width: 1px; background: #888; }
.ti { margin: 0 5px 0 4px; position: relative; top: -2px; }
.tag { padding-left: 1px; }
.pick { display: flex; align-items: center; height: 22px; width: 99px; margin-left: 4px; background: #0f83dc; color: #fff; }
.pick .ti { margin-left: 0; }
.split { height: 7px; width: 17px; margin-left: 156px; background: radial-gradient(circle, #aaa .7px, transparent .9px) 0 1px / 3px 4px repeat-x; }
.tabs { height: 29px; width: 325px; display: flex; align-items: flex-end; box-shadow: inset 0 -1px #bbb; }
.tab { width: 101px; height: 27px; border: 1px solid #b9b9b9; border-left: 0; background: #dedede; padding: 7px 0 0 13px; border-radius: 0 3px 0 0; }
.tab.on { width: 96px; height: 29px; border-left: 1px solid #b9b9b9; border-bottom: 0; background: linear-gradient(#fbfbfb, #efefef); padding: 8px 0 0 14px; border-radius: 3px 3px 0 0; }
.actions { display: flex; gap: 2px; padding: 7px 0 0 11px; }
.btn { width: 80px; height: 27px; border: 1px solid #b4b4b4; border-radius: 3px; background: linear-gradient(#fff, #f0f0f0); display: flex; align-items: center; justify-content: center; gap: 3px; padding-top: 1px; }
.btn.off { color: #7c7c7c; border-color: #c8c8c8; }
.btn.help { width: 57px; }
.btn.gear { width: 28px; }
.search { display: flex; gap: 2px; padding: 7px 0 0 11px; }
.field { width: 273px; height: 26px; border: 1px solid #b4b4b4; border-radius: 3px; background: #fff; color: #707070; display: flex; align-items: center; padding: 2px 0 0 2px; }
.scroll { display: flex; flex: 1 1 0; min-height: 0; padding: 7px 0 0 11px; overflow: hidden; }
.form { width: 287px; display: flex; flex-direction: column; overflow: hidden; }
.group { display: flex; gap: 4px; order: 0; }
.group.o1 { order: 2; margin-top: 9px; }
.gh { width: 191px; height: 27px; border: 1px solid #bcbcbc; background: #ebebeb; display: flex; align-items: center; padding-left: 12px; overflow: hidden; }
.gh b { width: 144px; overflow: hidden; margin-left: 8px; font-size: 13.5px; font-weight: 700; padding-top: 2px; }
.dash { width: 14px; height: 4px; background: #3598c8; border: 1px solid #5b9ab8; }
.sq { width: 33px; }
.row { display: flex; align-items: center; order: 1; }
.row label { width: 119px; padding-top: 1px; }
.row .combo { width: 180px; }
.r-scalars { margin-top: 8px; height: 27px; }
.row.r-scalars .combo { height: 27px; padding-left: 6px; }
.r-scalars svg { margin-right: 3px; }
.r-mode { margin-top: 4px; height: 23px; }
.r-comp { margin-top: 4px; height: 31px; }
.r-low { margin-top: 3px; height: 26px; }
.r-up { margin-top: 5px; height: 26px; }
.row.r-low label, .row.r-up label { padding-top: 2px; }
.slider { width: 52px; height: 5px; border: 1px solid #a9a9a9; border-radius: 3px; background: linear-gradient(90deg, #1686dd 6px, #dedede 6px); display: flex; align-items: center; padding-left: 3px; margin-left: 1px; }
.slider i { width: 16px; height: 16px; border: 1px solid #aaa; border-radius: 3px; background: #fbfbfb; }
.field.val { width: 95px; margin: 0 4px 0 8px; color: #000; }
.tail { width: 30px; height: 26px; }
.r-method { margin-top: 5px; height: 23px; }
.checks { order: 1; margin-top: 6px; display: flex; flex-direction: column; gap: 8px; }
.check { display: flex; align-items: center; height: 17px; gap: 6px; }
.ct { padding-top: 1px; }
.cb { width: 17px; height: 17px; border: 1px solid #b5b5b5; background: #fff; }
.r-rep { margin-top: 7px; order: 3; }
.row.r-rep label { width: 100px; }
.row.r-rep .combo { width: 195px; }
.coloring { order: 4; margin-top: 8px; height: 16px; border-bottom: 1px solid #a5a5a5; font-weight: bold; line-height: 17px; }
.r-color { order: 5; margin-top: 6px; gap: 4px; }
.row.r-color .combo.array { width: 150px; }
.row.r-color .combo.last { width: 139px; padding-right: 0; }
.sbar { width: 16px; background: #e2e2e2; }
.sup { height: 16px; background: #fafafa; border-bottom: 1px solid #c5c5c5; display: flex; align-items: center; justify-content: center; }
.thumb { height: 155px; background: linear-gradient(90deg, #fafafa, #f2f2f2); border-bottom: 1px solid #bbb; }
.view { width: 707px; display: flex; flex-direction: column; }
.vtabs { height: 31px; display: flex; align-items: flex-end; padding-top: 2px; }
.vtab { height: 28px; width: 37px; border: 1px solid #b9b9b9; border-left: 0; display: flex; align-items: center; justify-content: center; border-radius: 0 3px 0 0; background: #e9e9e9; }
.vtab.on { width: 129px; height: 29px; background: #fcfcfc; border-bottom: 0; justify-content: flex-start; padding: 1px 0 0 14px; gap: 4px; }
.vtab.on svg { margin-left: 2px; }
.vtab.add { font-size: 15px; }
.win { width: 16px; height: 15px; border: 1px solid #333; border-top-width: 4px; background: #fff; }
.fill { flex: 1 1 0; height: 1px; background: #aaa; }
.vbar { height: 27px; display: flex; align-items: center; padding-left: 1px; }
.vbar .cell { width: 26px; height: 24px; }
.three { font: bold 11px/16px "Open Sans", sans-serif; color: #5f6053; }
.canvas { flex: 1 1 0; margin-left: 1px; border-left: 2px solid #00f; border-top: 2px solid #00f; background: #fff; overflow: hidden; }
.marks { position: absolute; left: 0; top: 0; pointer-events: none; }
</style>
